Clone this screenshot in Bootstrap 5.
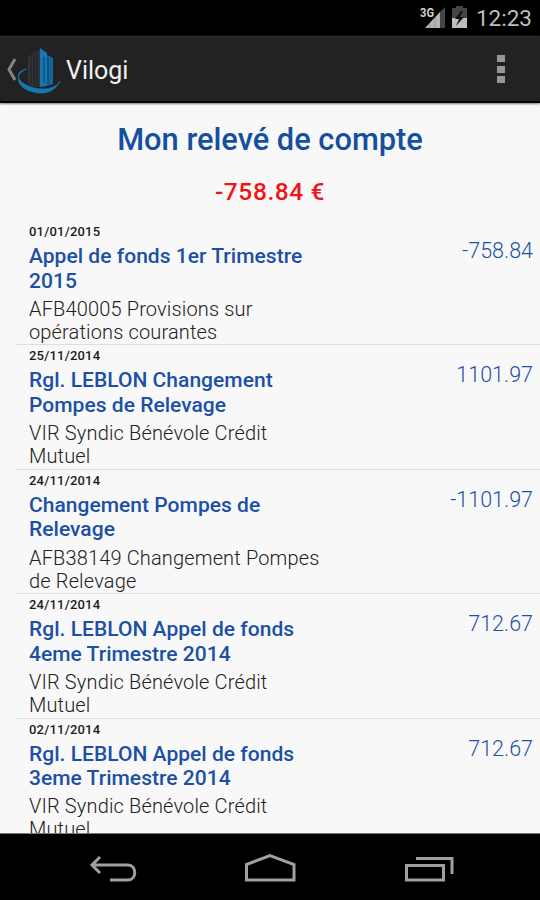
<!DOCTYPE html>
<html lang="fr">
<head>
<meta charset="utf-8">
<meta name="viewport" content="width=device-width, initial-scale=1">
<title>Vilogi</title>
<link href="https://cdn.jsdelivr.net/npm/bootstrap@5.3.0/dist/css/bootstrap.min.css" rel="stylesheet">
<style>
body{font-family:Roboto,"Liberation Sans",sans-serif;background:#f8f8f8;height:900px}
.status-bar{height:36px;background:#000;color:#bebebe;font-size:22.5px;padding:2px 8px 0 0}
.status-bar svg{margin:-2px 0 0 0}
.app-bar{height:67px;background:#222;border-top:1px solid #2c2c2c;border-bottom:2px solid #050505;box-shadow:0 1px 2px #777;color:#f2f2f2}
.app-name{font-size:25px;margin-left:4px;padding-top:4px}
.menu-dots{margin-right:32px}
.page-title{font-size:30.8px;font-weight:500;color:#14509f;line-height:36px;padding-top:19px}
.balance{font-size:24.5px;font-weight:500;color:#f01414;line-height:30px;margin-top:19px;letter-spacing:.6px}
.entries{margin-top:14px;margin-left:15px}
.entry{height:124.45px;padding:3px 7px 0 14px;border-bottom:1px solid #dedede}
.entry-text{width:300px}
.entry-date{font-size:13px;font-weight:500;line-height:15px;color:#1c1c1c;letter-spacing:.2px}
.entry-title{font-size:21px;font-weight:500;line-height:24.6px;color:#1c50a4;padding-top:5px;letter-spacing:.03px}
.entry-note{font-size:20px;font-weight:300;line-height:23px;color:#222;padding-top:4.5px;letter-spacing:.15px}
.amount{font-size:21.5px;font-weight:300;color:#1c50a4;line-height:26px;padding-top:14px}
.nav-keys{height:67px;background:#000;border-top:1px solid #777}
</style>
</head>
<body class="d-flex flex-column overflow-hidden">
<div class="status-bar d-flex align-items-center justify-content-end flex-shrink-0">
<svg width="56" height="36" viewBox="0 0 56 36"><path d="M5 28 20 12V28Z" fill="#b5b5b5"/><path d="M10 23v5M15 18v10" stroke="#888" stroke-width=".7"/><path d="M20 12l5-5v21h-5z" fill="#444"/><text x="0" y="17" font-size="13" font-weight="700" fill="#d0d0d0" stroke="#000" stroke-width="2" paint-order="stroke" textLength="14" lengthAdjust="spacingAndGlyphs">3G</text><path d="M32 8h4V6h7v2h4v11H32z" fill="#444"/><path d="M32 18h15v10H32z" fill="#bebebe"/><path d="M41 11l-6 8h4l-3 7 8-9h-4l3-6z" fill="#111"/></svg>
<span>12:23</span>
</div>
<div class="app-bar d-flex align-items-center flex-shrink-0 position-relative">
<svg width="62" height="64" viewBox="0 0 62 64"><path d="M15 22 9 32.500 15 43" fill="none" stroke="#858585" stroke-width="3"/><path d="M28 20 40 12v38l-12-2z" fill="#303438"/><path d="M31 20v27M34 18v30M37 16v33" stroke="#1d2024" stroke-width="1"/><path d="M40 11 47 16v33l-7 1z" fill="#1477b3"/><path d="M47 18 53 21v26l-6 2z" fill="#0f66a0"/><path d="M44 20v26M48 20v28" stroke="#123f61"/><path d="M27 32C14 34 16 45 31 50c12 4 25 2 29-6-6 13-19 14-30 10-15-5-15-18-3-22z" fill="#1678b3" stroke="#1678b3" stroke-width=".6"/></svg>
<span class="app-name me-auto">Vilogi</span>
<svg class="menu-dots" width="14" height="34" viewBox="0 0 14 34"><path d="M3 3h8v7H3zM3 14h8v7H3zM3 24h8v7H3z" fill="#969696"/></svg>
</div>
<main class="flex-fill overflow-hidden">
<h1 class="page-title text-center m-0">Mon relevé de compte</h1>
<div class="balance text-center">-758.84 €</div>
<div class="entries">
<div class="entry d-flex justify-content-between"><div class="entry-text"><div class="entry-date">01/01/2015</div><div class="entry-title">Appel de fonds 1er Trimestre<br>2015</div><div class="entry-note">AFB40005 Provisions sur<br>opérations courantes</div></div><div class="amount">-758.84</div></div>
<div class="entry d-flex justify-content-between"><div class="entry-text"><div class="entry-date">25/11/2014</div><div class="entry-title">Rgl. LEBLON Changement<br>Pompes de Relevage</div><div class="entry-note">VIR Syndic Bénévole Crédit<br>Mutuel</div></div><div class="amount">1101.97</div></div>
<div class="entry d-flex justify-content-between"><div class="entry-text"><div class="entry-date">24/11/2014</div><div class="entry-title">Changement Pompes de<br>Relevage</div><div class="entry-note">AFB38149 Changement Pompes<br>de Relevage</div></div><div class="amount">-1101.97</div></div>
<div class="entry d-flex justify-content-between"><div class="entry-text"><div class="entry-date">24/11/2014</div><div class="entry-title">Rgl. LEBLON Appel de fonds<br>4eme Trimestre 2014</div><div class="entry-note">VIR Syndic Bénévole Crédit<br>Mutuel</div></div><div class="amount">712.67</div></div>
<div class="entry d-flex justify-content-between"><div class="entry-text"><div class="entry-date">02/11/2014</div><div class="entry-title">Rgl. LEBLON Appel de fonds<br>3eme Trimestre 2014</div><div class="entry-note">VIR Syndic Bénévole Crédit<br>Mutuel</div></div><div class="amount">712.67</div></div>
</div>
</main>
<div class="nav-keys flex-shrink-0">
<svg class="d-block" width="540" height="66" viewBox="0 834 540 66" fill="none" stroke="#a0a0a0" stroke-width="3"><path d="M100 857l-8 8 8 8M92 865h36c9 0 9 15 0 15h-18"/><path d="M246.500 864.500 270 855.500l24 9V880h-47.500z"/><path d="M406.500 865.500h37V880h-37zM416 858.500h36V874"/></svg>
</div>
<script src="https://cdn.jsdelivr.net/npm/bootstrap@5.3.0/dist/js/bootstrap.bundle.min.js"></script>
</body>
</html>
